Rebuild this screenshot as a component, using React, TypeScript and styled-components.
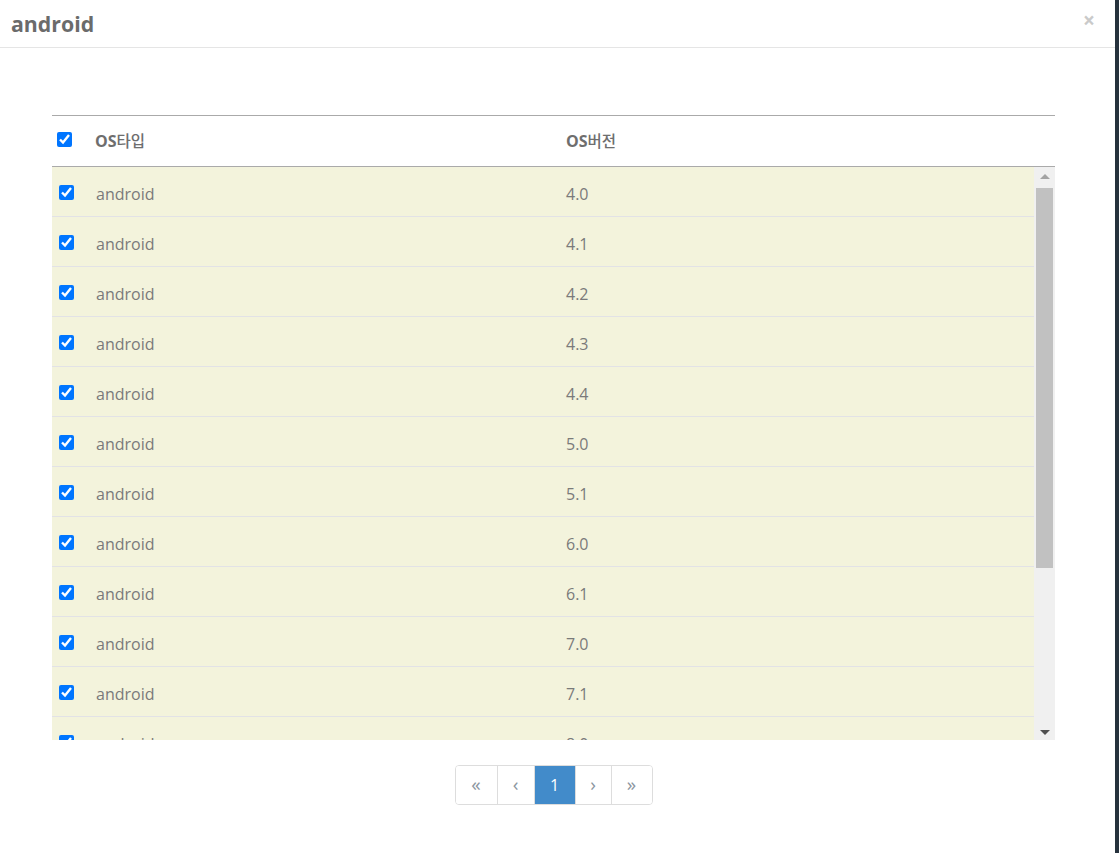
import React from "react";
import styled, { createGlobalStyle } from "styled-components";

const Global = createGlobalStyle`
  html, body { margin: 0; padding: 0; background: #fff; }
  body { font-family: "Open Sans", "Noto Sans CJK KR", sans-serif; }
  * { box-sizing: border-box; }
`;

const Page = styled.div`
  display: flex;
  width: 1119px;
  height: 853px;
  overflow: hidden;
`;

const Modal = styled.div`
  flex: 1;
  display: flex;
  flex-direction: column;
  background: #fff;
`;

const Edge = styled.div`
  width: 4px;
  background: #26323d;
`;

const Header = styled.div`
  height: 48px;
  border-bottom: 1px solid #e5e5e5;
  display: flex;
  align-items: center;
  justify-content: space-between;
  padding: 0 20px 0 11px;
`;

const Title = styled.h4`
  margin: 0;
  font-family: "Open Sans", sans-serif;
  font-weight: 700;
  font-size: 21.3px;
  color: #6b6b6b;
`;

const Close = styled.button`
  border: 0;
  background: none;
  padding: 0;
  font-family: "Open Sans", sans-serif;
  font-weight: 700;
  font-size: 21px;
  line-height: 1;
  color: #cacaca;
  margin-bottom: 6px;
  cursor: pointer;
`;

const Body = styled.div`
  padding: 67px 60px 0 52px;
  display: flex;
  flex-direction: column;
  align-items: center;
`;

const Table = styled.div`
  width: 100%;
  display: flex;
  flex-direction: column;
`;

const HeadRow = styled.div`
  display: grid;
  grid-template-columns: 43px 471px 1fr;
  align-items: center;
  height: 52px;
  border-top: 1px solid #aaaaaa;
  border-bottom: 1px solid #aaaaaa;
`;

const HeadCell = styled.div`
  font-family: "Open Sans", sans-serif;
  font-weight: 700;
  font-size: 16px;
  color: #6e6e6e;
  padding-bottom: 2px;
`;

const Hangul = styled.span`
  font-family: "Noto Sans CJK KR", sans-serif;
  font-weight: 500;
  font-size: 15.5px;
  color: #6e6e6e;
`;

const Check = styled.input.attrs({ type: "checkbox" })<{ $off?: number }>`
  width: 15px;
  height: 15px;
  margin: 0 0 0 ${(p) => p.$off ?? 0}px;
  accent-color: #0075ff;
  display: block;
`;

const HeadCheckCell = styled.div`
  padding-bottom: 4px;
`;

const ScrollBox = styled.div`
  display: flex;
  height: 573px;
`;

const Rows = styled.div`
  flex: 1;
  overflow: hidden;
`;

const ScrollBar = styled.div`
  width: 21px;
  background: #f0f0f0;
  display: flex;
  flex-direction: column;
  align-items: center;
`;

const ScrollArrow = styled.div<{ $down?: boolean }>`
  height: 21px;
  width: 100%;
  display: flex;
  align-items: center;
  justify-content: center;
  &::before {
    content: "";
    width: 0;
    height: 0;
    border-left: 5px solid transparent;
    border-right: 5px solid transparent;
    ${(p) =>
      p.$down
        ? "border-top: 5px solid #505050; margin-top: 5px;"
        : "border-bottom: 5px solid #a3a3a3; margin-bottom: 2px;"}
  }
`;

const Thumb = styled.div`
  width: 17px;
  height: 380px;
  background: #c1c1c1;
`;

const Track = styled.div`
  flex: 1;
`;

const Row = styled.div`
  display: grid;
  grid-template-columns: 44px 470px 1fr;
  align-items: center;
  height: 50px;
  background: #f3f3dc;
`;

const Cell = styled.div<{ $first?: boolean }>`
  height: 100%;
  display: flex;
  align-items: center;
  border-bottom: 1px solid #e2e2e6;
  font-family: "Open Sans", sans-serif;
  font-size: 16px;
  color: #7a7a7a;
  padding-top: ${(p) => (p.$first ? 1 : 5)}px;
`;

const Pager = styled.ul`
  list-style: none;
  display: flex;
  margin: 25px 0 0;
  padding: 0;
  border: 1px solid #dddddd;
  border-radius: 4px;
  overflow: hidden;
`;

const PageBtn = styled.li<{ $active?: boolean; $w: number }>`
  width: ${(p) => p.$w}px;
  height: 38px;
  display: flex;
  align-items: center;
  justify-content: center;
  font-family: "Open Sans", sans-serif;
  font-size: ${(p) => (p.$active ? 16 : 19)}px;
  color: ${(p) => (p.$active ? "#fff" : "#8c96a0")};
  background: ${(p) => (p.$active ? "#428bca" : "#fff")};
  padding-bottom: ${(p) => (p.$active ? 0 : 3)}px;
  & + & {
    border-left: 1px solid #dddddd;
  }
`;

const versions = ["4.0", "4.1", "4.2", "4.3", "4.4", "5.0", "5.1", "6.0", "6.1", "7.0", "7.1", "8.0", "8.1", "9.0", "10.0", "11.0"];

export default function App() {
  return (
    <>
      <Global />
      <Page>
        <Modal>
          <Header>
            <Title>android</Title>
            <Close aria-label="close">×</Close>
          </Header>
          <Body>
            <Table>
              <HeadRow>
                <HeadCheckCell>
                  <Check $off={5} defaultChecked />
                </HeadCheckCell>
                <HeadCell>
                  OS<Hangul>타입</Hangul>
                </HeadCell>
                <HeadCell>
                  OS<Hangul>버전</Hangul>
                </HeadCell>
              </HeadRow>
              <ScrollBox>
                <Rows>
                  {versions.map((v) => (
                    <Row key={v}>
                      <Cell $first>
                        <Check $off={7} defaultChecked />
                      </Cell>
                      <Cell>android</Cell>
                      <Cell>{v}</Cell>
                    </Row>
                  ))}
                </Rows>
                <ScrollBar>
                  <ScrollArrow />
                  <Thumb />
                  <Track />
                  <ScrollArrow $down />
                </ScrollBar>
              </ScrollBox>
            </Table>
            <Pager>
              <PageBtn $w={41}>«</PageBtn>
              <PageBtn $w={37}>‹</PageBtn>
              <PageBtn $w={41} $active>1</PageBtn>
              <PageBtn $w={36}>›</PageBtn>
              <PageBtn $w={41}>»</PageBtn>
            </Pager>
          </Body>
        </Modal>
        <Edge />
      </Page>
    </>
  );
}
